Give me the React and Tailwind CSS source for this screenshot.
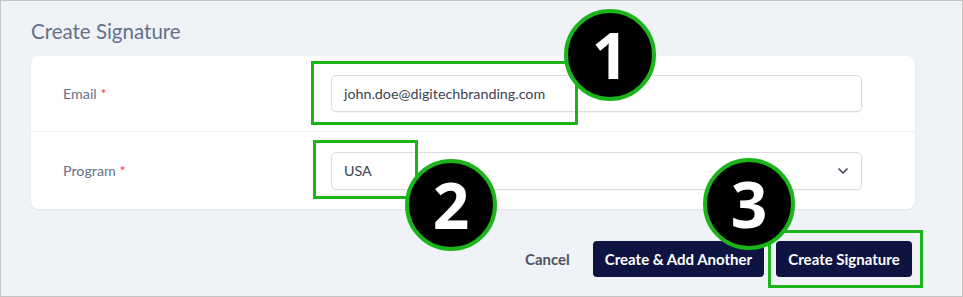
import { ChevronDown } from 'lucide-react'

function Marker({ n, className }) {
  return (
    <div
      className={`absolute flex h-[92px] w-[92px] items-center justify-center rounded-full border-[4px] border-[#1bb51b] bg-black text-[64px] font-bold leading-none text-white ${className}`}
      style={{ fontFamily: '"Open Sans", sans-serif' }}
    >
      {n}
    </div>
  )
}

function Highlight({ className }) {
  return <div className={`absolute border-[3px] border-[#1bb51b] ${className}`} />
}

export default function App() {
  return (
    <div
      className="relative h-[297px] w-[963px] overflow-hidden border border-[#c4c4c4] bg-[#eff2f7]"
      style={{ fontFamily: 'Lato, "Open Sans", sans-serif' }}
    >
      <div className="px-[30px] pt-[16px]">
        <h1 className="text-[20.5px] leading-[28px] text-[#64718a]">Create Signature</h1>

        <div className="mt-[11px] w-[884px] rounded-lg bg-white shadow-[0_1px_2px_rgba(0,0,0,0.06)]">
          <div className="flex h-[76px] items-center border-b border-[#eef0f4] pl-[32px] pr-[53px]">
            <label className="w-[268px] text-[14.3px] text-[#64718a]">
              Email <span className="text-[#ef4444]">*</span>
            </label>
            <div className="flex h-[37px] flex-1 items-center rounded-[5px] border border-[#d9dce2] px-[12px] text-[14.3px] text-[#3b4452] shadow-[0_1px_1px_rgba(0,0,0,0.05)]">
              john.doe@digitechbranding.com
            </div>
          </div>
          <div className="flex h-[77px] items-center pl-[32px] pr-[53px]">
            <label className="w-[268px] text-[14.3px] text-[#64718a]">
              Program <span className="text-[#ef4444]">*</span>
            </label>
            <div className="flex h-[38px] flex-1 items-center justify-between rounded-[5px] border border-[#d9dce2] pl-[12px] pr-[10px] text-[14.3px] text-[#3b4452] shadow-[0_1px_1px_rgba(0,0,0,0.05)]">
              <span>USA</span>
              <ChevronDown size={16} strokeWidth={2.5} className="text-[#3f4756]" />
            </div>
          </div>
        </div>

        <div className="mt-[32px] flex w-[881px] items-center justify-end text-[15px] font-bold">
          <button className="mr-[25px] w-[43px] text-[#4b5563]">Cancel</button>
          <button className="mr-[12px] h-[36px] w-[171px] rounded-[4px] bg-[#0e1442] text-white">
            Create &amp; Add Another
          </button>
          <button className="h-[36px] w-[136px] rounded-[4px] bg-[#0e1442] text-white">
            Create Signature
          </button>
        </div>
      </div>

      <Highlight className="left-[310px] top-[60px] h-[64px] w-[267px]" />
      <Highlight className="left-[312px] top-[139px] h-[59px] w-[105px]" />
      <Highlight className="left-[767px] top-[229px] h-[58px] w-[155px]" />

      <Marker n="1" className="left-[563px] top-[8px]" />
      <Marker n="2" className="left-[404px] top-[158px]" />
      <Marker n="3" className="left-[702px] top-[157px]" />
    </div>
  )
}
